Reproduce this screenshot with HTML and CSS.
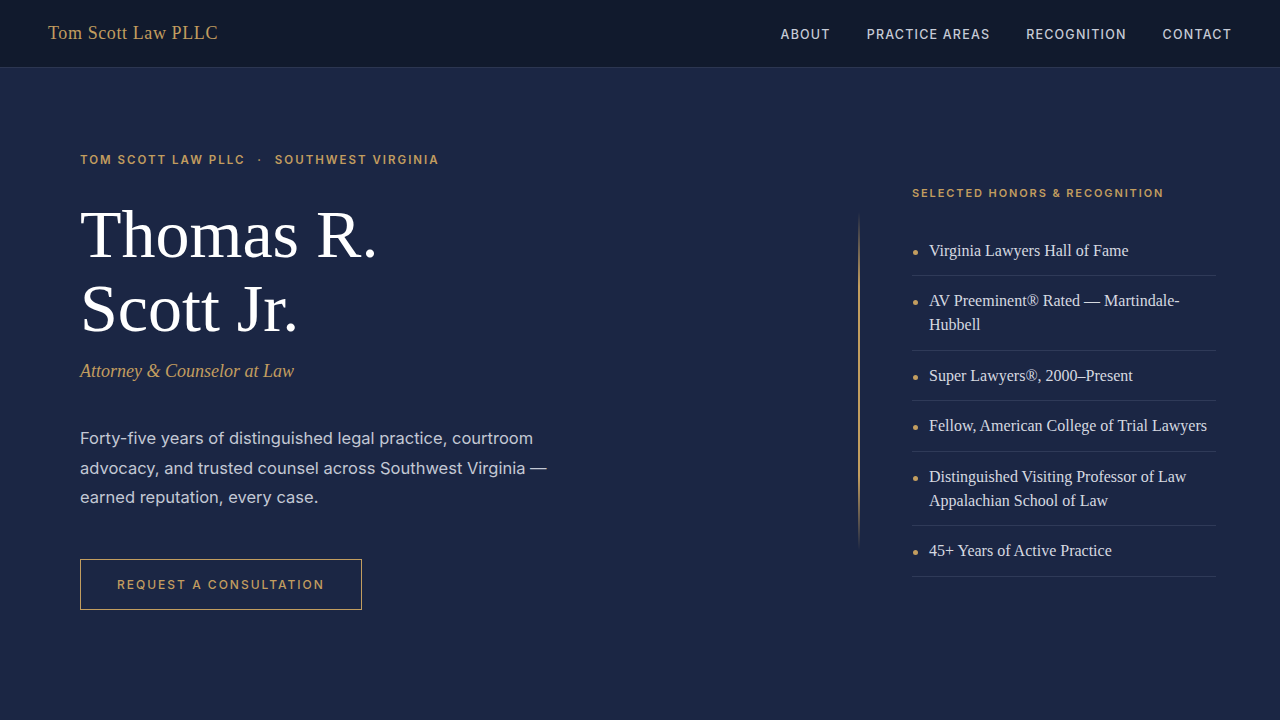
FILE: index.html
```html
<!DOCTYPE html>
<html lang="en">
<head>
    <meta charset="UTF-8">
    <meta name="viewport" content="width=device-width, initial-scale=1.0">
    <title>Tom Scott Law PLLC</title>
    <link rel="stylesheet" href="styles.css">
</head>
<body>
    <header class="topbar">
        <a class="brand" href="#">Tom Scott Law PLLC</a>
        <nav class="nav">
            <a href="#about">About</a>
            <a href="#practice">Practice Areas</a>
            <a href="#recognition">Recognition</a>
            <a href="#contact">Contact</a>
        </nav>
    </header>

    <main class="hero">
        <section class="intro">
            <p class="eyebrow">Tom Scott Law PLLC <span class="dot">·</span> Southwest Virginia</p>
            <h1 class="name">Thomas R.<br>Scott Jr.</h1>
            <p class="role">Attorney &amp; Counselor at Law</p>
            <p class="lead">Forty-five years of distinguished legal practice, courtroom advocacy, and trusted counsel across Southwest Virginia — earned reputation, every case.</p>
            <a class="cta" href="#contact">Request a Consultation</a>
        </section>

        <div class="rule"></div>

        <aside class="honors" id="recognition">
            <h2 class="honors-title">Selected Honors &amp; Recognition</h2>
            <ul class="honors-list">
                <li>Virginia Lawyers Hall of Fame</li>
                <li>AV Preeminent® Rated — Martindale-Hubbell</li>
                <li>Super Lawyers®, 2000–Present</li>
                <li>Fellow, American College of Trial Lawyers</li>
                <li>Distinguished Visiting Professor of Law Appalachian School of Law</li>
                <li>45+ Years of Active Practice</li>
            </ul>
        </aside>
    </main>
</body>
</html>
```

FILE: styles.css
```css
* {
    margin: 0;
    padding: 0;
    box-sizing: border-box;
    text-decoration: none;
    list-style: none;
}

body {
    background: #1b2644;
    font-family: Inter, "Liberation Sans", sans-serif;
    color: #c3c8d4;
    min-height: 720px;
}

/* top bar */
.topbar {
    height: 68px;
    background: #111a2d;
    border-bottom: 1px solid #2c3651;
    display: flex;
    align-items: center;
    justify-content: space-between;
    padding: 0 48px;
}

.brand {
    font-family: "Liberation Serif", serif;
    font-size: 18px;
    letter-spacing: 0.6px;
    color: #c29d5f;
}

.nav {
    display: flex;
    gap: 36px;
    padding-top: 2px;
}

.nav a {
    font-size: 12.5px;
    font-weight: 500;
    letter-spacing: 1.2px;
    text-transform: uppercase;
    color: #c6cbd6;
}

/* hero */
.hero {
    display: flex;
    align-items: center;
    padding: 85px 64px 0 80px;
}

.intro {
    flex: 1;
}

.eyebrow {
    font-size: 11.5px;
    font-weight: 600;
    letter-spacing: 2px;
    text-transform: uppercase;
    color: #c29d5f;
}

.eyebrow .dot {
    margin: 0 7px;
}

.name {
    margin-top: 30px;
    font-family: "Liberation Serif", serif;
    font-size: 68px;
    font-weight: 400;
    line-height: 74px;
    color: #fff;
}

.role {
    margin-top: 16px;
    font-family: "Liberation Serif", serif;
    font-style: italic;
    font-size: 18px;
    color: #c29d5f;
}

.lead {
    margin-top: 42px;
    max-width: 470px;
    font-size: 16.5px;
    line-height: 29.5px;
    color: #c3c8d4;
}

.cta {
    display: inline-block;
    margin-top: 46px;
    padding: 17px 36px;
    border: 1px solid #c29d5f;
    font-size: 12px;
    font-weight: 500;
    letter-spacing: 2px;
    text-transform: uppercase;
    color: #c29d5f;
}

/* gold divider between columns */
.rule {
    width: 2px;
    height: 338px;
    margin: 0 52px 0 0;
    background: linear-gradient(to bottom, rgba(194, 157, 95, 0), #c29d5f 22%, #c29d5f 78%, rgba(194, 157, 95, 0));
}

/* honors list */
.honors {
    width: 304px;
}

.honors-title {
    font-size: 11px;
    font-weight: 600;
    letter-spacing: 1.9px;
    text-transform: uppercase;
    color: #c29d5f;
}

.honors-list {
    margin-top: 26px;
}

.honors-list li {
    position: relative;
    padding: 13px 0 12.5px 17px;
    border-bottom: 1px solid #2f3a58;
    font-family: "Liberation Serif", serif;
    font-size: 16px;
    line-height: 24px;
    color: #d6d9e0;
}

.honors-list li::before {
    content: "";
    position: absolute;
    left: 1px;
    top: 24px;
    width: 5px;
    height: 5px;
    border-radius: 50%;
    background: #c29d5f;
}
```
